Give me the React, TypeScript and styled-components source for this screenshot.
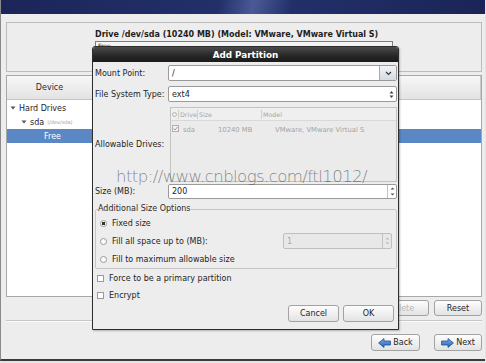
import React from "react";
import styled, { createGlobalStyle } from "styled-components";

const GlobalStyle = createGlobalStyle`
  html, body { margin: 0; padding: 0; }
  body {
    background: #e4e4e4;
    font-family: "DejaVu Sans", "Noto Sans", sans-serif;
    font-size: 8px;
    color: #1e1e1e;
  }
  * { box-sizing: border-box; }
`;

const Screen = styled.div`
  position: relative;
  width: 486px;
  height: 363px;
  overflow: hidden;
  background: #e4e4e4;
`;

const Installer = styled.div`
  width: 485px;
  height: 361px;
  background: #ededed;
  border-left: 1px solid #8a8a8a;
  border-bottom: 2px solid #3a3a3a;
  display: flex;
  flex-direction: column;
`;

const Banner = styled.div`
  flex: none;
  height: 14px;
  background: linear-gradient(100deg, #1b2558 0%, #22306a 45%, #4a5a96 52%, #22306a 60%, #1a2456 100%);
`;

const Main = styled.div`
  flex: 1;
  display: flex;
  flex-direction: column;
  padding: 8px 3px 0 5px;
`;

const DrivePanel = styled.div`
  height: 50px;
  border: 1px solid #bcbcbc;
  padding: 7px 0 0 88px;
`;

const DriveTitle = styled.div`
  font-weight: bold;
  line-height: 10px;
`;

const DriveBar = styled.div`
  margin-top: 1px;
  width: 298px;
  height: 16px;
  border: 1px solid #7c7c7c;
  background: #f4f4f4;
  padding: 0 0 0 2px;
  font-size: 6px;
  line-height: 8px;
`;

const Tree = styled.div`
  margin-top: 3px;
  height: 222px;
  border: 1px solid #a8a8a8;
  background: #fff;
  display: flex;
  flex-direction: column;
`;

const TreeHeader = styled.div`
  flex: none;
  height: 24px;
  display: flex;
  background: linear-gradient(#f7f7f7, #e3e3e3);
  border-bottom: 1px solid #c4c4c4;
`;

const HeaderCell = styled.div<{ $w?: number }>`
  ${(p) => (p.$w ? `width: ${p.$w}px;` : "flex: 1;")}
  display: flex;
  align-items: center;
  justify-content: center;
  border-right: 1px solid #c8c8c8;
  color: #2a2a2a;
`;

const TreeRow = styled.div<{ $indent: number; $selected?: boolean }>`
  height: 14px;
  display: flex;
  align-items: center;
  padding-left: ${(p) => p.$indent}px;
  background: ${(p) => (p.$selected ? "#5b87c5" : "transparent")};
  color: ${(p) => (p.$selected ? "#fff" : "#1e1e1e")};
`;

const RowsWrap = styled.div`
  padding-top: 1px;
`;

const Expander = styled.svg`
  width: 6px;
  height: 6px;
  margin-right: 3px;
`;

const DevPath = styled.span`
  margin-left: 3px;
  font-size: 5px;
  color: #9a9a9a;
`;

const ActionRow = styled.div`
  margin-top: 3px;
  height: 16px;
  display: flex;
  justify-content: flex-end;
  gap: 5px;
`;

const Separator = styled.div`
  margin-top: 4px;
  border-top: 1px solid #c6c6c6;
  border-bottom: 1px solid #fafafa;
`;

const NavRow = styled.div`
  margin-top: 12px;
  height: 17px;
  display: flex;
  justify-content: flex-end;
  gap: 14px;
`;

const Button = styled.button<{ $w: number; $dim?: boolean }>`
  width: ${(p) => p.$w}px;
  height: 100%;
  padding: 0;
  border: 1px solid #a2a2a2;
  border-radius: 3px;
  background: linear-gradient(#fdfdfd, #e3e3e3);
  font: inherit;
  color: ${(p) => (p.$dim ? "#b8b8b8" : "#1e1e1e")};
  display: flex;
  align-items: center;
  justify-content: center;
  gap: 2px;
`;

/* dialog */

const Dialog = styled.div`
  position: absolute;
  left: 92px;
  top: 46px;
  width: 307px;
  height: 284px;
  border: 1px solid #2e2e2e;
  border-radius: 3px 3px 0 0;
  background: #ededed;
  box-shadow: 1px 1px 2px rgba(0, 0, 0, 0.25);
  display: flex;
  flex-direction: column;
`;

const TitleBar = styled.div`
  flex: none;
  height: 15px;
  background: linear-gradient(#4b4b4b, #262626 60%, #1b1b1b);
  color: #fff;
  font-weight: bold;
  font-size: 8.8px;
  display: flex;
  align-items: center;
  justify-content: center;
  border-radius: 2px 2px 0 0;
`;

const DialogBody = styled.div`
  flex: 1;
  display: flex;
  flex-direction: column;
  padding: 3px 1px 0 2px;
`;

const FormRow = styled.div<{ $gap: number; $h: number }>`
  margin-top: ${(p) => p.$gap}px;
  height: ${(p) => p.$h}px;
  display: grid;
  grid-template-columns: 73px 1fr;
  align-items: center;
`;

const Field = styled.div<{ $disabled?: boolean }>`
  height: 100%;
  display: flex;
  align-items: stretch;
  border: 1px solid ${(p) => (p.$disabled ? "#bfbfbf" : "#9a9a9a")};
  border-radius: 2px;
  background: ${(p) => (p.$disabled ? "#e8e8e8" : "#fff")};
  color: ${(p) => (p.$disabled ? "#a8a8a8" : "#1e1e1e")};
`;

const FieldText = styled.div`
  flex: 1;
  display: flex;
  align-items: center;
  padding-left: 3px;
`;

const DropButton = styled.div`
  width: 17px;
  border-left: 1px solid #a6aab0;
  background: linear-gradient(#f2f4f7, #d5dbe3);
  display: flex;
  align-items: center;
  justify-content: center;
`;

const SpinButtons = styled.div<{ $w: number }>`
  width: ${(p) => p.$w}px;
  border-left: 1px solid #c2c2c2;
  display: flex;
  flex-direction: column;
  align-items: center;
  justify-content: space-evenly;
`;

const ArrowSlot = styled.div`
  width: 10px;
  display: flex;
  align-items: center;
  justify-content: center;
`;

const DrivesTable = styled.div`
  margin-left: 2px;
  height: 100%;
  border: 1px solid #c2c2c2;
  background: #ebebeb;
  color: #a4a4a4;
  font-size: 6.8px;
`;

const TableLine = styled.div<{ $cols: string; $head?: boolean }>`
  height: 13px;
  display: grid;
  grid-template-columns: ${(p) => p.$cols};
  align-items: center;
  background: ${(p) => (p.$head ? "#efefef" : "transparent")};
  border-bottom: ${(p) => (p.$head ? "1px solid #d8d8d8" : "none")};
  margin-top: ${(p) => (p.$head ? 0 : 2)}px;
`;

const HeadCell = styled.div<{ $sep?: boolean }>`
  padding-left: 1px;
  border-left: ${(p) => (p.$sep ? "1px solid #cfcfcf" : "none")};
  height: 9px;
  line-height: 9px;
  font-size: 6.3px;
  white-space: nowrap;
`;

const RadioHead = styled.span`
  display: block;
  width: 5px;
  height: 5px;
  margin-top: 2px;
  border-radius: 50%;
  border: 1px solid #b4b4b4;
`;

const Cell = styled.div`
  white-space: nowrap;
`;

const SizeFrame = styled.fieldset`
  margin: 5px 0 0 0;
  padding: 0 0 0 2px;
  min-width: 0;
  border: 1px solid #c6c6c6;
  border-radius: 2px;
  height: 65px;
`;

const Legend = styled.legend`
  padding: 0;
  line-height: 10px;
  color: #2a2a2a;
`;

const OptionRow = styled.div`
  height: 18px;
  display: flex;
  align-items: center;
  padding-left: 2px;
  gap: 5px;
`;

const Radio = styled.span<{ $on?: boolean }>`
  flex: none;
  width: 7px;
  height: 7px;
  border-radius: 50%;
  border: 1px solid #9a9a9a;
  background: radial-gradient(circle, ${(p) => (p.$on ? "#333 0 1.6px" : "#fff 0 0")}, #fafafa 1.7px);
`;

const InlineSpin = styled.div`
  margin-left: auto;
  margin-right: 4px;
  width: 109px;
  height: 16px;
`;

const CheckRow = styled.div<{ $gap: number }>`
  margin-top: ${(p) => p.$gap}px;
  height: 17px;
  display: flex;
  align-items: center;
  padding-left: 2px;
  gap: 5px;
`;

const Box = styled.span`
  flex: none;
  width: 7px;
  height: 7px;
  border: 1px solid #9a9a9a;
  background: #fff;
`;

const DialogButtons = styled.div`
  margin-top: 1px;
  height: 17px;
  display: flex;
  justify-content: flex-end;
  gap: 4px;
  padding-right: 3px;
`;

const Watermark = styled.div`
  position: absolute;
  left: 116px;
  top: 167px;
  font-family: "DejaVu Sans", sans-serif;
  font-weight: 300;
  font-size: 16.6px;
  letter-spacing: -0.6px;
  color: rgba(70, 70, 70, 0.62);
  white-space: nowrap;
  pointer-events: none;
`;

const Chevron = () => (
  <svg width="7" height="5" viewBox="0 0 7 5">
    <path d="M1 1 L3.5 3.5 L6 1" fill="none" stroke="#333" strokeWidth="1.1" />
  </svg>
);

const UpDown = ({ color = "#444" }: { color?: string }) => (
  <svg width="5" height="9" viewBox="0 0 5 9">
    <path d="M0.5 3.5 L2.5 1 L4.5 3.5 Z M0.5 5.5 L2.5 8 L4.5 5.5 Z" fill={color} />
  </svg>
);

const SpinArrow = ({ down, color }: { down?: boolean; color: string }) => (
  <svg width="5" height="3" viewBox="0 0 5 3">
    <path d={down ? "M0.5 0.5 L2.5 2.5 L4.5 0.5 Z" : "M0.5 2.5 L2.5 0.5 L4.5 2.5 Z"} fill={color} />
  </svg>
);

const NavArrow = ({ dir }: { dir: "left" | "right" }) => (
  <svg width="13" height="10" viewBox="0 0 13 10" style={{ transform: dir === "right" ? "scaleX(-1)" : undefined }}>
    <defs>
      <linearGradient id={`nav-${dir}`} x1="0" y1="0" x2="0" y2="1">
        <stop offset="0" stopColor="#7fb0e8" />
        <stop offset="1" stopColor="#2460b0" />
      </linearGradient>
    </defs>
    <path d="M0.6 5 L6 0.6 L6 3 L12.4 3 L12.4 7 L6 7 L6 9.4 Z" fill={`url(#nav-${dir})`} stroke="#1d4f94" strokeWidth="0.8" />
  </svg>
);

const TreeArrow = () => (
  <Expander viewBox="0 0 6 6">
    <path d="M0.5 1.5 L5.5 1.5 L3 4.5 Z" fill="#555" />
  </Expander>
);

const CheckedBox = () => (
  <svg width="7" height="7" viewBox="0 0 7 7">
    <rect x="0.5" y="0.5" width="6" height="6" fill="#f2f2f2" stroke="#b0b0b0" />
    <path d="M1.6 3.6 L3 5 L5.6 1.8" fill="none" stroke="#9a9a9a" strokeWidth="1" />
  </svg>
);

const App = () => {
  return (
    <Screen>
      <GlobalStyle />
      <Installer>
        <Banner />
        <Main>
          <DrivePanel>
            <DriveTitle>Drive /dev/sda (10240 MB) (Model: VMware, VMware Virtual S)</DriveTitle>
            <DriveBar>Free</DriveBar>
          </DrivePanel>
          <Tree>
            <TreeHeader>
              <HeaderCell $w={86}>Device</HeaderCell>
              <HeaderCell />
            </TreeHeader>
            <RowsWrap>
              <TreeRow $indent={3}>
                <TreeArrow />
                Hard Drives
              </TreeRow>
              <TreeRow $indent={14}>
                <TreeArrow />
                sda
                <DevPath>(/dev/sda)</DevPath>
              </TreeRow>
              <TreeRow $indent={37} $selected>
                Free
              </TreeRow>
            </RowsWrap>
          </Tree>
          <ActionRow>
            <Button $w={56} $dim>
              Delete
            </Button>
            <Button $w={48}>Reset</Button>
          </ActionRow>
          <Separator />
          <NavRow>
            <Button $w={49}>
              <NavArrow dir="left" />
              Back
            </Button>
            <Button $w={48}>
              <NavArrow dir="right" />
              Next
            </Button>
          </NavRow>
        </Main>
      </Installer>

      <Dialog>
        <TitleBar>Add Partition</TitleBar>
        <DialogBody>
          <FormRow $gap={0} $h={16}>
            <span>Mount Point:</span>
            <Field>
              <FieldText>/</FieldText>
              <DropButton>
                <Chevron />
              </DropButton>
            </Field>
          </FormRow>
          <FormRow $gap={5} $h={16}>
            <span>File System Type:</span>
            <Field>
              <FieldText>ext4</FieldText>
              <ArrowSlot>
                <UpDown />
              </ArrowSlot>
            </Field>
          </FormRow>
          <FormRow $gap={5} $h={75}>
            <span>Allowable Drives:</span>
            <DrivesTable>
              <TableLine $head $cols="7px 19px 64px 1fr">
                <HeadCell>
                  <RadioHead />
                </HeadCell>
                <HeadCell $sep>Drive</HeadCell>
                <HeadCell $sep>Size</HeadCell>
                <HeadCell $sep>Model</HeadCell>
              </TableLine>
              <TableLine $cols="12px 35px 57px 1fr">
                <Cell style={{ paddingLeft: 1 }}>
                  <CheckedBox />
                </Cell>
                <Cell>sda</Cell>
                <Cell>10240 MB</Cell>
                <Cell>VMware, VMware Virtual S</Cell>
              </TableLine>
            </DrivesTable>
          </FormRow>
          <FormRow $gap={2} $h={15}>
            <span>Size (MB):</span>
            <Field>
              <FieldText>200</FieldText>
              <SpinButtons $w={9}>
                <SpinArrow color="#555" />
                <SpinArrow down color="#555" />
              </SpinButtons>
            </Field>
          </FormRow>
          <SizeFrame>
            <Legend>Additional Size Options</Legend>
            <OptionRow>
              <Radio $on />
              Fixed size
            </OptionRow>
            <OptionRow>
              <Radio />
              Fill all space up to (MB):
              <InlineSpin>
                <Field $disabled>
                  <FieldText>1</FieldText>
                  <SpinButtons $w={9}>
                    <SpinArrow color="#bbb" />
                    <SpinArrow down color="#bbb" />
                  </SpinButtons>
                </Field>
              </InlineSpin>
            </OptionRow>
            <OptionRow>
              <Radio />
              Fill to maximum allowable size
            </OptionRow>
          </SizeFrame>
          <CheckRow $gap={1}>
            <Box />
            Force to be a primary partition
          </CheckRow>
          <CheckRow $gap={0}>
            <Box />
            Encrypt
          </CheckRow>
          <DialogButtons>
            <Button $w={51}>Cancel</Button>
            <Button $w={51}>OK</Button>
          </DialogButtons>
        </DialogBody>
      </Dialog>

      <Watermark>http://www.cnblogs.com/ftl1012/</Watermark>
    </Screen>
  );
};

export default App;
